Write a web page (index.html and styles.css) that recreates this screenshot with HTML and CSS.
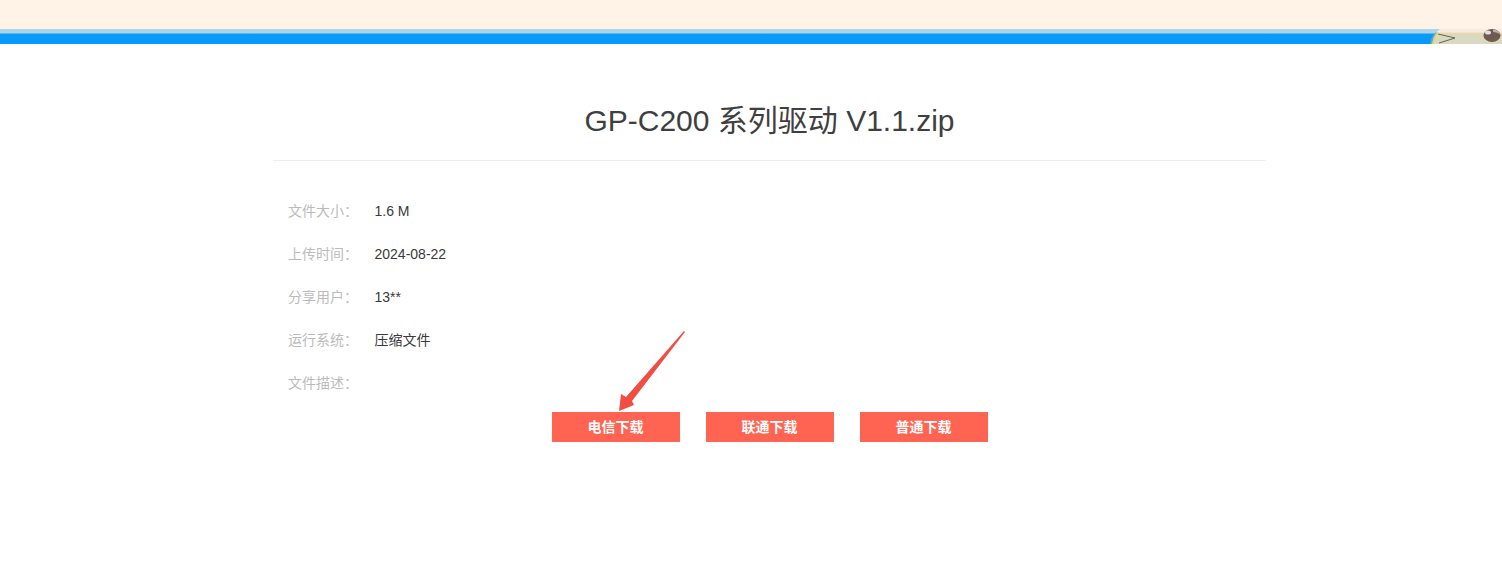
FILE: index.html
```html
<!DOCTYPE html>
<html lang="zh-CN">
<head>
    <meta charset="UTF-8">
    <meta name="viewport" content="width=device-width, initial-scale=1.0">
    <title>GP-C200 系列驱动 V1.1.zip</title>
    <link rel="stylesheet" href="styles.css">
</head>
<body>
    <!-- 顶部横幅 -->
    <header class="banner">
        <div class="banner-top"></div>
        <div class="banner-bar">
            <svg class="banner-art" width="72" height="15" viewBox="0 0 72 15">
                <path d="M2 15 Q3 5 10 0 L72 0 L72 15 Z" fill="#d8d9c0"/>
                <path d="M2 15 Q3 5 10 0 L72 0 L72 4 L9 4 Q5 8 4 15 Z" fill="#f6ebdc"/>
                <path d="M2 15 Q3 8 7 3 L8.5 4 Q5 8 4 15 Z" fill="#d9d860"/>
                <path d="M0 15 Q1 8 5 4 L7 3 Q3 8 2 15 Z" fill="#6aa6c8"/>
                <path d="M9 4 L72 4" stroke="#f2d9a8" stroke-width="1"/>
                <path d="M8 5 L25 9 L9 14" fill="none" stroke="#6b6150" stroke-width="1"/>
                <ellipse cx="62" cy="6.5" rx="8.5" ry="6.5" fill="#6f5a4c"/>
                <ellipse cx="58" cy="3.5" rx="3" ry="2" fill="#d8e2ea"/>
                <path d="M63 0.5 Q69 1 70 5 Q66 3 63 3 Z" fill="#c2aea0"/>
            </svg>
        </div>
    </header>

    <main class="content">
        <h1 class="file-title">GP-C200 系列驱动 V1.1.zip</h1>
        <ul class="file-info">
            <li><span class="info-label">文件大小：</span><span class="info-value">1.6 M</span></li>
            <li><span class="info-label">上传时间：</span><span class="info-value">2024-08-22</span></li>
            <li><span class="info-label">分享用户：</span><span class="info-value">13**</span></li>
            <li><span class="info-label">运行系统：</span><span class="info-value">压缩文件</span></li>
            <li><span class="info-label">文件描述：</span><span class="info-value"></span></li>
        </ul>
        <div class="downloads">
            <a class="btn" href="#">电信下载
                <svg class="arrow" width="70" height="84" viewBox="0 0 70 84">
                    <path d="M67 0 L68 1 L15 70 L17 74 L2 80 L4 63 L9 66 Z" fill="#f04e43"/>
                </svg>
            </a>
            <a class="btn" href="#">联通下载</a>
            <a class="btn" href="#">普通下载</a>
        </div>
    </main>
</body>
</html>
```

FILE: styles.css
```css
/* 全局样式 */
* { box-sizing: border-box; }
html, body {
    margin: 0;
    padding: 0;
    height: 100%;
    overflow: hidden;
    background-color: #fff;
    font-family: "Liberation Sans", Arial, "Noto Sans CJK SC", sans-serif;
    font-size: 14px;
    color: #3a3a3a;
}
/* 顶部横幅 */
.banner-top {
    height: 29px;
    background-color: #fff2e7;
}
.banner-bar {
    display: flex;
    justify-content: flex-end;
    height: 15px;
    background: linear-gradient(#a9d4ec 0, #a9d4ec 4px, #0f9af5 5px, #0099ff 100%);
}
.banner-art {
    display: block;
}
/* 文件内容 */
.content {
    width: 993px;
    margin-left: 273px;
}
.file-title {
    margin: 0;
    height: 117px;
    padding-top: 57px;
    border-bottom: 1px solid #eee;
    text-align: center;
    font-size: 30px;
    font-weight: normal;
    line-height: 40px;
    color: #3f3f3f;
}
.file-info {
    list-style: none;
    margin: 0;
    padding: 29px 0 0 15px;
}
.file-info li {
    display: flex;
    height: 43px;
    line-height: 43px;
}
.info-label {
    width: 86.5px;
    color: #bbb;
}
.info-value {
    color: #3a3a3a;
}
/* 下载按钮 */
.downloads {
    display: flex;
    justify-content: center;
    gap: 26px;
    margin-top: 7px;
}
.btn {
    position: relative;
    display: block;
    width: 128px;
    height: 30px;
    line-height: 30px;
    background-color: #ff6452;
    color: #fff;
    text-align: center;
    font-weight: bold;
    text-decoration: none;
}
.arrow {
    position: absolute;
    left: 65px;
    top: -81px;
}
```
